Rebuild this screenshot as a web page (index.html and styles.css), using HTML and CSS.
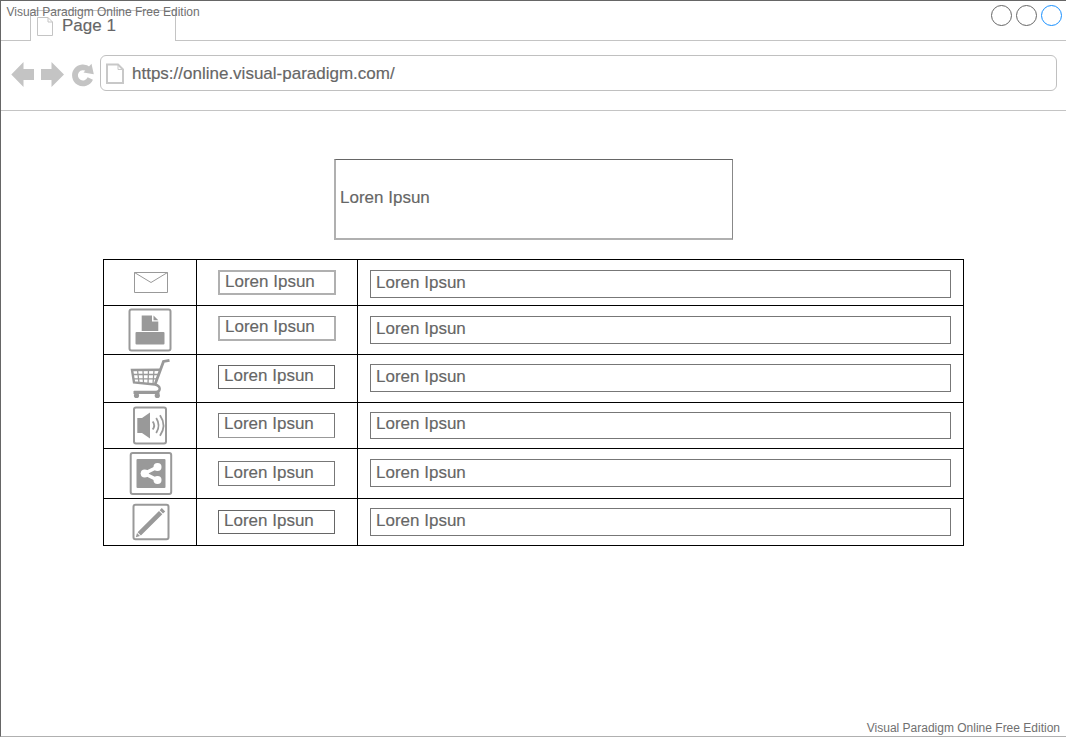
FILE: index.html
```html
<!DOCTYPE html>
<html lang="en">
<head>
<meta charset="utf-8">
<title>Page 1</title>
<link rel="stylesheet" href="styles.css">
</head>
<body>
<div class="window">
  <header class="tabstrip">
    <div class="tab-lead"></div>
    <div class="tab">
      <svg class="tab-icon" width="18" height="20" viewBox="0 0 18 20"><path d="M1.500 1.500H12L16.500 6V19.500H1.500ZM12 1.500V6H16.500" fill="#fff" stroke="#c4c4c4"/></svg>
      <span class="tab-title">Page 1</span>
    </div>
    <div class="tab-rest">
      <span class="dot"></span><span class="dot"></span><span class="dot dot-blue"></span>
    </div>
    <span class="mark mark-top">Visual Paradigm Online Free Edition</span>
  </header>
  <nav class="toolbar">
    <svg class="nav" width="89" height="36" viewBox="11 55 89 36" fill="#c4c4c4">
      <path d="M11.300 74.500L23.500 62V69H34V80H23.500V87Z"/>
      <path d="M64 74.500L51.500 62V69H41V80H51.500V87Z"/>
      <path d="M88.500 69.500A8 8 0 1 0 90.300 78.500" fill="none" stroke="#c4c4c4" stroke-width="5.800"/>
      <path d="M91.500 63.800L93.800 74.200L83.500 72.500Z"/>
    </svg>
    <div class="address">
      <svg width="20" height="22" viewBox="0 0 20 22"><path d="M2 1.500H13L18 6.500V20H2Z" fill="#fff" stroke="#c8c8c8" stroke-width="2"/><path d="M13 1.500V6.500H18" fill="none" stroke="#c8c8c8"/></svg>
      <span class="url">https://online.visual-paradigm.com/</span>
    </div>
  </nav>
  <main class="page">
    <div class="hero">Loren Ipsun</div>
    <div class="list">
      <div class="cell"><svg width="92" height="45" viewBox="104 260 92 45"><path d="M134.500 272.500H167.500V292.500H134.500ZM134.500 272.500L151 282.500L167.500 272.500" fill="none" stroke="#999"/></svg></div>
      <div class="cell"><div class="box small s1">Loren Ipsun</div></div>
      <div class="cell"><div class="box wide w1">Loren Ipsun</div></div>

      <div class="cell"><svg width="92" height="48" viewBox="104 306 92 48"><rect x="129.500" y="309.500" width="41" height="41" rx="2" fill="none" stroke="#999" stroke-width="2"/><path d="M141.700 315.500H152V321.500H158.300V331H141.700ZM153.500 315.500L158.300 320.300H153.500Z" fill="#999"/><rect x="135.500" y="332" width="29" height="12.500" rx="1" fill="#999"/></svg></div>
      <div class="cell"><div class="box small s2">Loren Ipsun</div></div>
      <div class="cell"><div class="box wide w2">Loren Ipsun</div></div>

      <div class="cell"><svg width="92" height="47" viewBox="104 355 92 47"><g fill="none" stroke="#999"><path d="M169.500 360.300L163.500 361.500L155.200 384" stroke-width="2.800"/><path d="M161 369.700L132 370L134 382.500L155 384.500C161 386 161 391 156.500 392H134" stroke-width="2.400"/><path d="M137.500 370L139 383M143 370L143.500 383.500M148.500 370L148 384M154 370L153 384M132.500 374.500H159M133 378.800H157.500" stroke-width="1.300"/></g><rect x="133.500" y="391" width="26" height="3" fill="#999"/><circle cx="136.500" cy="395.500" r="2.600" fill="#999"/><circle cx="157.300" cy="395.500" r="2.600" fill="#999"/></svg></div>
      <div class="cell"><div class="box small s3">Loren Ipsun</div></div>
      <div class="cell"><div class="box wide w3">Loren Ipsun</div></div>

      <div class="cell"><svg width="92" height="45" viewBox="104 403 92 45"><rect x="134" y="407.500" width="32" height="36" rx="2" fill="none" stroke="#999" stroke-width="2"/><path d="M137.300 418H142L150 412.500V438.500L142 433H137.300Z" fill="#999"/><path d="M152.700 421.500Q155.700 425.500 152.700 429.500M156.200 418Q161 425.500 156.200 433M160 415.200Q167 425.500 160 435.800" fill="none" stroke="#999" stroke-width="1.800"/></svg></div>
      <div class="cell"><div class="box small s4">Loren Ipsun</div></div>
      <div class="cell"><div class="box wide w4">Loren Ipsun</div></div>

      <div class="cell"><svg width="92" height="49" viewBox="104 449 92 49"><rect x="130.700" y="453" width="40.500" height="41" rx="2" fill="none" stroke="#999" stroke-width="2"/><rect x="136.500" y="459" width="29" height="29" rx="1" fill="#999"/><path d="M157.500 467L144.500 473.500L157.500 480" fill="none" stroke="#fff" stroke-width="3.600"/><g fill="#fff"><circle cx="144.700" cy="473.500" r="4"/><circle cx="157.500" cy="467" r="4"/><circle cx="157.500" cy="480" r="4"/></g></svg></div>
      <div class="cell"><div class="box small s5">Loren Ipsun</div></div>
      <div class="cell"><div class="box wide w5">Loren Ipsun</div></div>

      <div class="cell"><svg width="92" height="46" viewBox="104 499 92 46"><rect x="133.500" y="504.700" width="35" height="34.600" rx="2" fill="none" stroke="#999" stroke-width="2"/><path d="M135.800 537.300L137 533L140 536ZM137.600 532.300L159 510.900L162.300 514.200L140.900 535.600ZM159.700 510.200L161.800 508L165.200 511.400L163 513.500Z" fill="#999"/></svg></div>
      <div class="cell"><div class="box small s6">Loren Ipsun</div></div>
      <div class="cell"><div class="box wide w6">Loren Ipsun</div></div>
    </div>
  </main>
  <footer class="footer"><span class="mark">Visual Paradigm Online Free Edition</span></footer>
</div>
</body>
</html>
```

FILE: styles.css
```css
* { box-sizing: border-box; }
body {
  margin: 0;
  background: #fff;
  color: #666;
  font: 17px/20px "Liberation Sans", Arial, sans-serif;
  -webkit-text-stroke: 0.15px #666;
}
.window {
  display: flex;
  flex-direction: column;
  width: 1066px;
  height: 737px;
  overflow: hidden;
  border: solid #666;
  border-width: 1px 0 1px 1px;
  border-bottom-color: #b0b0b0;
}
.tabstrip {
  position: relative;
  display: flex;
  flex: none;
  height: 40px;
}
.tab-lead { width: 29px; border-bottom: 1px solid #c4c4c4; }
.tab {
  display: flex;
  width: 146px;
  margin-top: 9px;
  border: solid #c4c4c4;
  border-width: 1px 1px 0;
}
.tab-icon { margin: 5px 0 0 5px; }
.tab-title { margin: 5px 0 0 8px; }
.tab-rest {
  display: flex;
  flex: 1;
  justify-content: flex-end;
  gap: 4px;
  padding: 4px 4px 0 0;
  border-bottom: 1px solid #c4c4c4;
}
.dot { width: 21px; height: 21px; border: 1px solid #666; border-radius: 50%; }
.dot-blue { border-color: #1890ff; }
.mark {
  font-size: 12px;
  line-height: 14px;
  white-space: nowrap;
  color: #707070;
  -webkit-text-stroke: 0;
}
.mark-top { position: absolute; left: 5.5px; top: 4px; }
.toolbar {
  display: flex;
  flex: none;
  height: 70px;
  padding: 14px 9px 0 10px;
  border-bottom: 1px solid #c4c4c4;
}
.nav { flex: none; }
.address {
  display: flex;
  flex: 1;
  height: 36px;
  padding: 7px 0 0 4px;
  border: 1px solid #c0c0c0;
  border-radius: 6px;
}
.url { margin: 1px 0 0 7px; }
.page { flex: 1; padding: 48px 0 0 102px; }
.hero {
  width: 399px;
  height: 81px;
  margin-left: 231px;
  padding: 28px 0 0 4px;
  border: solid #b0b0b0;
  border-width: 1px 1px 2px 2px;
  border-top-color: #666;
  border-right-color: #888;
}
.list {
  display: grid;
  grid-template-columns: 93px 161px 606px;
  grid-template-rows: 46px 49px 48px 46px 50px 47px;
  width: 861px;
  margin-top: 19px;
  border: solid #000;
  border-width: 1px 0 0 1px;
}
.cell { display: flex; align-items: flex-start; border: solid #000; border-width: 0 1px 1px 0; }
.box { border: 1px solid #777; white-space: nowrap; }
.small { width: 117px; height: 25px; margin-left: 21px; padding-left: 5px; }
.wide { width: 581px; height: 28px; margin-left: 12px; padding: 2px 0 0 5px; }
.s1, .s2 { width: 118px; border: 2px solid #b0b0b0; }
.s1 { margin-top: 10px; }
.s2 { margin-top: 10px; border-top: 1px solid #888; }
.s3 { height: 24px; margin-top: 10px; border-color: #666; }
.s4 { margin-top: 10px; border-bottom-color: #999; }
.s5 { margin-top: 12px; padding-top: 1px; }
.s6 { height: 24px; margin-top: 11px; border-color: #666; }
.w1 { margin-top: 10px; }
.w2 { margin-top: 10px; }
.w3 { margin-top: 9px; }
.w4 { height: 27px; margin-top: 9px; padding-top: 1px; }
.w5 { margin-top: 10px; padding-top: 3px; }
.w6 { margin-top: 9px; }
.footer { display: flex; flex: none; justify-content: flex-end; height: 15px; padding-right: 6px; }
```
